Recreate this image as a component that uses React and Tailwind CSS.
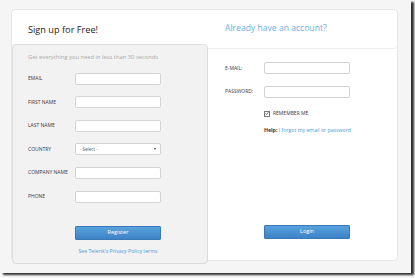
const font = { fontFamily: '"Open Sans", "Noto Sans", sans-serif' }

function Field({ label, select }) {
  return (
    <div className="flex items-center h-[12px]">
      <span className="w-[47px] text-[5px] uppercase text-[#3d3540] leading-none">{label}</span>
      {select ? (
        <div className="w-[86px] h-[12px] bg-white border border-[#d4d4d4] rounded-[2px] flex items-center justify-between px-[4px]">
          <span className="text-[4.5px] text-[#555] leading-none">- Select -</span>
          <span className="w-0 h-0 border-l-[1.5px] border-r-[1.5px] border-t-[2px] border-l-transparent border-r-transparent border-t-[#444]" />
        </div>
      ) : (
        <div className="w-[86px] h-[12px] bg-white border border-[#d4d4d4] rounded-[2px]" />
      )}
    </div>
  )
}

function BlueButton({ children }) {
  return (
    <div className="w-[86px] h-[14px] rounded-[1px] border border-[#3a78b6] bg-gradient-to-b from-[#58a2de] to-[#3e82c6] flex items-center justify-center text-[5.5px] text-white leading-none">
      {children}
    </div>
  )
}

function SignUp() {
  return (
    <div className="w-[196px] flex flex-col">
      <div className="h-[34px] flex items-end pl-[16px] pb-[10px] text-[9.2px] leading-none text-[#222]">
        Sign up for Free!
      </div>
      <div className="h-[222px] -mb-[4px] bg-[#f2f2f2] border border-[#dcdcdc] rounded-[4px] pl-[15px] pt-[10px] flex flex-col">
        <p className="text-[5.8px] leading-none text-[#aaa]">Get everything you need in less than 30 seconds</p>
        <div className="mt-[12px] flex flex-col gap-[11.6px]">
          <Field label="Email" />
          <Field label="First name" />
          <Field label="Last name" />
          <Field label="Country" select />
          <Field label="Company name" />
          <Field label="Phone" />
        </div>
        <div className="mt-[23px] ml-[47px] flex flex-col items-center w-[86px]">
          <BlueButton>Register</BlueButton>
          <p className="mt-[9px] whitespace-nowrap text-[5.2px] leading-none text-[#4a9ad8]">See Telerik's Privacy Policy terms</p>
        </div>
      </div>
    </div>
  )
}

function Login() {
  return (
    <div className="flex-1 flex flex-col">
      <div className="h-[39px] border-b border-[#ececec] rounded-br-[4px] flex items-end pl-[17px] pb-[15px] text-[8.6px] leading-none text-[#6aaee3]">
        Already have an account?
      </div>
      <div className="pl-[17px] pt-[13px] flex flex-col">
        <div className="flex flex-col gap-[11.5px]">
          <div className="flex items-center h-[12px]">
            <span className="w-[39px] text-[5px] uppercase text-[#3d3540] leading-none">E-mail:</span>
            <div className="w-[86px] h-[12px] bg-white border border-[#d4d4d4] rounded-[2px]" />
          </div>
          <div className="flex items-center h-[12px]">
            <span className="w-[39px] text-[5px] uppercase text-[#3d3540] leading-none">Password:</span>
            <div className="w-[86px] h-[12px] bg-white border border-[#d4d4d4] rounded-[2px]" />
          </div>
        </div>
        <div className="ml-[39px] mt-[13px] flex items-center gap-[3px]">
          <span className="w-[6px] h-[6px] border border-[#777] bg-white flex items-center justify-center">
            <svg viewBox="0 0 6 6" className="w-[5px] h-[5px]">
              <path d="M1 3 L2.5 4.5 L5 1" fill="none" stroke="#222" strokeWidth="1" />
            </svg>
          </span>
          <span className="text-[5px] uppercase text-[#3d3540] leading-none">Remember me</span>
        </div>
        <p className="ml-[39px] mt-[11px] text-[5.2px] leading-none whitespace-nowrap">
          <span className="font-bold text-[#333]">Help:</span>{' '}
          <span className="text-[#4a9ad8]">I forgot my email or password</span>
        </p>
        <div className="ml-[39px] mt-[92px]">
          <BlueButton>Login</BlueButton>
        </div>
      </div>
    </div>
  )
}

export default function App() {
  return (
    <div className="w-[415px] h-[278px] bg-[#fafafa] overflow-hidden" style={font}>
      <div className="w-[411px] h-[273px] bg-[#f5f5f5] shadow-[3px_2px_2px_#2e2e2e] pt-[9px] pl-[11px]">
        <div className="w-[387px] h-[252px] bg-white border border-[#e6e6e6] rounded-[4px] flex">
          <SignUp />
          <Login />
        </div>
      </div>
    </div>
  )
}
